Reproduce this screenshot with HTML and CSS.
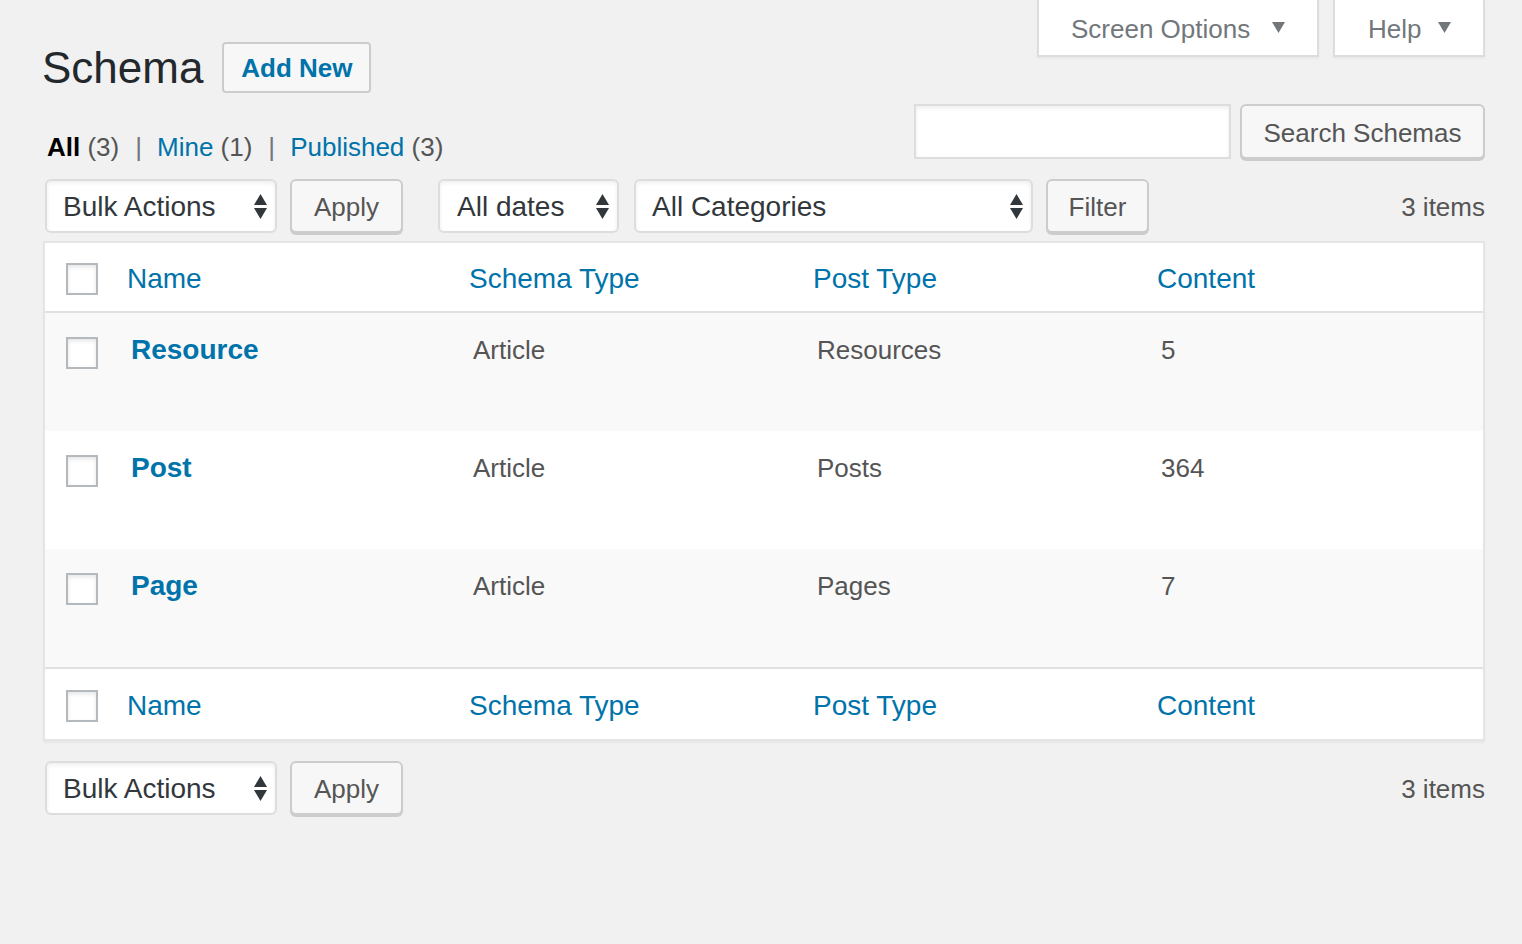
FILE: index.html
```html
<!DOCTYPE html>
<html lang="en">
<head>
<meta charset="utf-8">
<title>Schema</title>
<link rel="stylesheet" href="styles.css">
</head>
<body>
<div class="wrap">
  <div class="top">
    <div class="top-left">
      <div class="title-row">
        <h1 class="page-title">Schema</h1>
        <a class="btn add-new">Add New</a>
      </div>
      <ul class="subsubsub">
        <li><a class="current">All <span class="count">(3)</span></a><span class="sep">|</span></li>
        <li><a>Mine <span class="count">(1)</span></a><span class="sep">|</span></li>
        <li><a>Published <span class="count">(3)</span></a></li>
      </ul>
    </div>
    <div class="top-right">
      <div class="meta-links">
        <div class="meta-tab tab-options">Screen Options <svg class="tri" viewBox="0 0 13 11" width="13" height="11"><polygon points="0,0 13,0 6.5,11"/></svg></div>
        <div class="meta-tab tab-help">Help <svg class="tri" viewBox="0 0 13 11" width="13" height="11"><polygon points="0,0 13,0 6.5,11"/></svg></div>
      </div>
      <div class="search-box">
        <div class="search-input"></div>
        <div class="btn search-btn">Search Schemas</div>
      </div>
    </div>
  </div>

  <div class="tablenav">
    <div class="select sel-bulk"><span>Bulk Actions</span><svg class="arrows" viewBox="0 0 13 25" width="13" height="25"><polygon points="6.5,0 13,11 0,11"/><polygon points="0,14 13,14 6.5,25"/></svg></div>
    <div class="btn apply">Apply</div>
    <div class="select sel-dates"><span>All dates</span><svg class="arrows" viewBox="0 0 13 25" width="13" height="25"><polygon points="6.5,0 13,11 0,11"/><polygon points="0,14 13,14 6.5,25"/></svg></div>
    <div class="select sel-cats"><span>All Categories</span><svg class="arrows" viewBox="0 0 13 25" width="13" height="25"><polygon points="6.5,0 13,11 0,11"/><polygon points="0,14 13,14 6.5,25"/></svg></div>
    <div class="btn filter">Filter</div>
    <div class="items">3 items</div>
  </div>

  <div class="list-table">
    <div class="row head">
      <div class="cell check"><span class="checkbox"></span></div>
      <div class="cell col"><a>Name</a></div>
      <div class="cell col"><a>Schema Type</a></div>
      <div class="cell col"><a>Post Type</a></div>
      <div class="cell col"><a>Content</a></div>
    </div>
    <div class="row item alt">
      <div class="cell check"><span class="checkbox"></span></div>
      <div class="cell data"><a class="row-title">Resource</a></div>
      <div class="cell data">Article</div>
      <div class="cell data">Resources</div>
      <div class="cell data">5</div>
    </div>
    <div class="row item">
      <div class="cell check"><span class="checkbox"></span></div>
      <div class="cell data"><a class="row-title">Post</a></div>
      <div class="cell data">Article</div>
      <div class="cell data">Posts</div>
      <div class="cell data">364</div>
    </div>
    <div class="row item alt">
      <div class="cell check"><span class="checkbox"></span></div>
      <div class="cell data"><a class="row-title">Page</a></div>
      <div class="cell data">Article</div>
      <div class="cell data">Pages</div>
      <div class="cell data">7</div>
    </div>
    <div class="row foot">
      <div class="cell check"><span class="checkbox"></span></div>
      <div class="cell col"><a>Name</a></div>
      <div class="cell col"><a>Schema Type</a></div>
      <div class="cell col"><a>Post Type</a></div>
      <div class="cell col"><a>Content</a></div>
    </div>
  </div>

  <div class="tablenav bottom">
    <div class="select sel-bulk"><span>Bulk Actions</span><svg class="arrows" viewBox="0 0 13 25" width="13" height="25"><polygon points="6.5,0 13,11 0,11"/><polygon points="0,14 13,14 6.5,25"/></svg></div>
    <div class="btn apply">Apply</div>
    <div class="items">3 items</div>
  </div>
</div>
</body>
</html>
```
FILE: styles.css
```css
* { box-sizing: border-box; }
html, body { margin: 0; padding: 0; }
body {
  background: #f1f1f1;
  font-family: "Liberation Sans", Arial, Helvetica, sans-serif;
  color: #444;
  width: 1522px;
  height: 944px;
  overflow: hidden;
}
a { color: #0073aa; text-decoration: none; }

.wrap { padding: 0 37px 0 43px; }

/* top area */
.top { display: flex; justify-content: space-between; align-items: flex-start; height: 167px; }
.top-left { padding-top: 42px; }
.title-row { display: flex; align-items: center; height: 51px; }
.page-title {
  margin: 0 19px 0 -1px;
  font-size: 44px;
  font-weight: 400;
  line-height: 51px;
  color: #23282d;
}
.btn {
  display: flex;
  align-items: center;
  justify-content: center;
  border: 2px solid #ccc;
  border-radius: 6px;
  background: #f7f7f7;
  color: #555;
  font-size: 26px;
}
.add-new {
  width: 149px;
  height: 51px;
  font-weight: 700;
  color: #0073aa;
  border-radius: 4px;
  padding-top: 2px;
}
.subsubsub {
  list-style: none;
  margin: 34px 0 0 4px;
  padding: 0;
  display: flex;
  font-size: 26px;
  line-height: 40px;
  color: #666;
}
.subsubsub li { display: flex; }
.subsubsub a.current { color: #000; font-weight: 700; }
.subsubsub .count { color: #555; font-weight: 400; }
.subsubsub .sep { margin: 0 15px 0 16px; color: #72777c; }

.top-right { display: flex; flex-direction: column; align-items: flex-end; }
.meta-links { display: flex; gap: 14px; }
.meta-tab {
  height: 57px;
  display: flex;
  align-items: center;
  justify-content: space-between;
  background: #fff;
  border: 2px solid #ddd;
  border-top: none;
  box-shadow: 0 2px 2px rgba(0,0,0,.04);
  font-size: 26px;
  color: #72777c;
  padding-top: 3px;
}
.tab-options { width: 282px; padding-left: 32px; padding-right: 32px; }
.tab-help { width: 152px; padding-left: 33px; padding-right: 32px; }
.tri { fill: #72777c; margin-top: -3px; }

.search-box { display: flex; gap: 9px; margin-top: 47px; }
.search-input {
  width: 317px;
  height: 55px;
  background: #fff;
  border: 2px solid #ddd;
  box-shadow: inset 0 2px 4px rgba(0,0,0,.07);
}
.search-btn { width: 245px; height: 55px; box-shadow: 0 2px 0 #ccc; padding-top: 3px; }

/* tablenav */
.tablenav { display: flex; align-items: flex-start; height: 54px; margin-top: 12px; padding-left: 2px; }
.select {
  height: 54px;
  display: flex;
  align-items: center;
  justify-content: space-between;
  background: #fff;
  border: 2px solid #ddd;
  border-radius: 6px;
  box-shadow: inset 0 2px 4px rgba(0,0,0,.07);
  font-size: 28px;
  color: #32373c;
  padding: 0 8px 0 16px;
}
.select span { padding-top: 1px; }
.arrows { fill: #32373c; flex: none; }
.sel-bulk { width: 232px; }
.sel-dates { width: 181px; margin-left: 35px; padding-left: 17px; }
.sel-cats { width: 399px; margin-left: 15px; }
.apply { width: 113px; height: 54px; margin-left: 13px; box-shadow: 0 2px 0 #ccc; padding-top: 2px; }
.filter { width: 103px; height: 54px; margin-left: 13px; box-shadow: 0 2px 0 #ccc; padding-top: 2px; }
.items { margin-left: auto; line-height: 56px; font-size: 26px; color: #555; }

/* list table */
.list-table {
  margin-top: 8px;
  background: #fff;
  border: 2px solid #e5e5e5;
  box-shadow: 0 2px 2px rgba(0,0,0,.04);
}
.row { display: grid; grid-template-columns: 62px 342px 344px 344px 1fr; }
.row.head { height: 70px; border-bottom: 2px solid #e1e1e1; align-items: center; }
.row.foot { height: 72px; border-top: 2px solid #e1e1e1; align-items: center; }
.row.item { height: 118px; align-items: start; }
.row.item:first-of-type { height: 119px; }
.row.alt { background: #f9f9f9; }
.cell.check { padding-left: 21px; display: flex; }
.row.head .cell.check, .row.foot .cell.check { padding-top: 4px; }
.row.item .cell.check { padding-top: 24px; }
.checkbox {
  display: block;
  width: 32px;
  height: 32px;
  background: #fff;
  border: 2px solid #b4b9be;
  box-shadow: inset 0 2px 4px rgba(0,0,0,.1);
}
.cell.col { padding-left: 20px; font-size: 28px; line-height: 40px; padding-top: 4px; }
.cell.data { padding: 17px 0 0 24px; font-size: 26px; line-height: 40px; color: #555; }
.row-title { font-size: 28px; font-weight: 700; }

.tablenav.bottom { margin-top: 20px; }
```
